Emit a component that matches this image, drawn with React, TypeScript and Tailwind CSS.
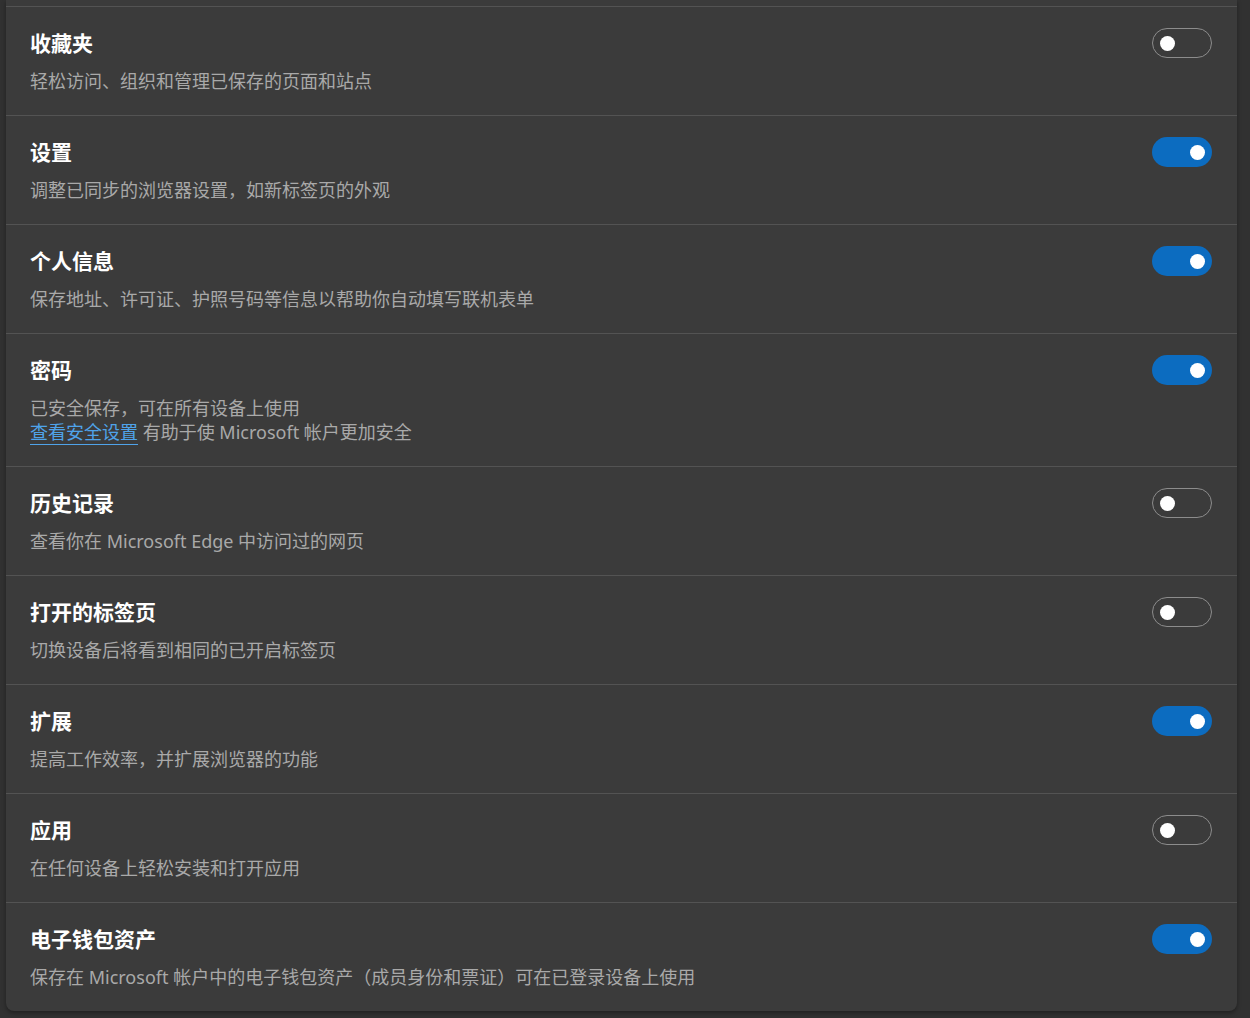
import { useState } from 'react';

type Item = {
  id: string;
  title: string;
  desc: string;
  on: boolean;
  link?: { label: string; after: string };
};

const ITEMS: Item[] = [
  { id: 'fav', title: '收藏夹', desc: '轻松访问、组织和管理已保存的页面和站点', on: false },
  { id: 'settings', title: '设置', desc: '调整已同步的浏览器设置，如新标签页的外观', on: true },
  { id: 'info', title: '个人信息', desc: '保存地址、许可证、护照号码等信息以帮助你自动填写联机表单', on: true },
  {
    id: 'pwd',
    title: '密码',
    desc: '已安全保存，可在所有设备上使用',
    on: true,
    link: { label: '查看安全设置', after: ' 有助于使 Microsoft 帐户更加安全' },
  },
  { id: 'history', title: '历史记录', desc: '查看你在 Microsoft Edge 中访问过的网页', on: false },
  { id: 'tabs', title: '打开的标签页', desc: '切换设备后将看到相同的已开启标签页', on: false },
  { id: 'ext', title: '扩展', desc: '提高工作效率，并扩展浏览器的功能', on: true },
  { id: 'apps', title: '应用', desc: '在任何设备上轻松安装和打开应用', on: false },
  { id: 'wallet', title: '电子钱包资产', desc: '保存在 Microsoft 帐户中的电子钱包资产（成员身份和票证）可在已登录设备上使用', on: true },
];

function Toggle({ on, onClick }: { on: boolean; onClick: () => void }) {
  return (
    <button
      onClick={onClick}
      aria-pressed={on}
      className={`mt-[-1px] w-[60px] h-[30px] rounded-full flex items-center shrink-0 px-[7px] ${
        on ? 'bg-[#0c6cc0] justify-end' : 'border border-[#8c8c8c] justify-start'
      }`}
    >
      <span className="w-[15px] h-[15px] rounded-full bg-white block" />
    </button>
  );
}

export default function App() {
  const [state, setState] = useState<Record<string, boolean>>(
    Object.fromEntries(ITEMS.map((i) => [i.id, i.on])),
  );

  return (
    <div
      className="min-h-[1018px] bg-[#313131] pl-[6px] pr-[13px] pb-[8px]"
      style={{ fontFamily: '"Noto Sans", "Noto Sans CJK SC", sans-serif' }}
    >
      <div className="bg-[#3b3b3b] rounded-b-lg pt-[6px] shadow-[0_2px_4px_rgba(0,0,0,0.35)]">
        {ITEMS.map((item) => (
          <div
            key={item.id}
            className="border-t border-[#535353] flex items-start pl-[24px] pr-[25px] pt-[22px] pb-[22px]"
          >
            <div className="flex-1">
              <div className="text-white text-[21px] leading-[28px] font-bold">{item.title}</div>
              <div className="mt-[12px] text-[#a9a9a9] text-[18px] leading-[24px]">
                {item.desc}
                {item.link && (
                  <div>
                    <a href="#" className="text-[#4fa3ea] underline underline-offset-[5px]">
                      {item.link.label}
                    </a>
                    {item.link.after}
                  </div>
                )}
              </div>
            </div>
            <Toggle
              on={state[item.id]}
              onClick={() => setState((s) => ({ ...s, [item.id]: !s[item.id] }))}
            />
          </div>
        ))}
      </div>
    </div>
  );
}
